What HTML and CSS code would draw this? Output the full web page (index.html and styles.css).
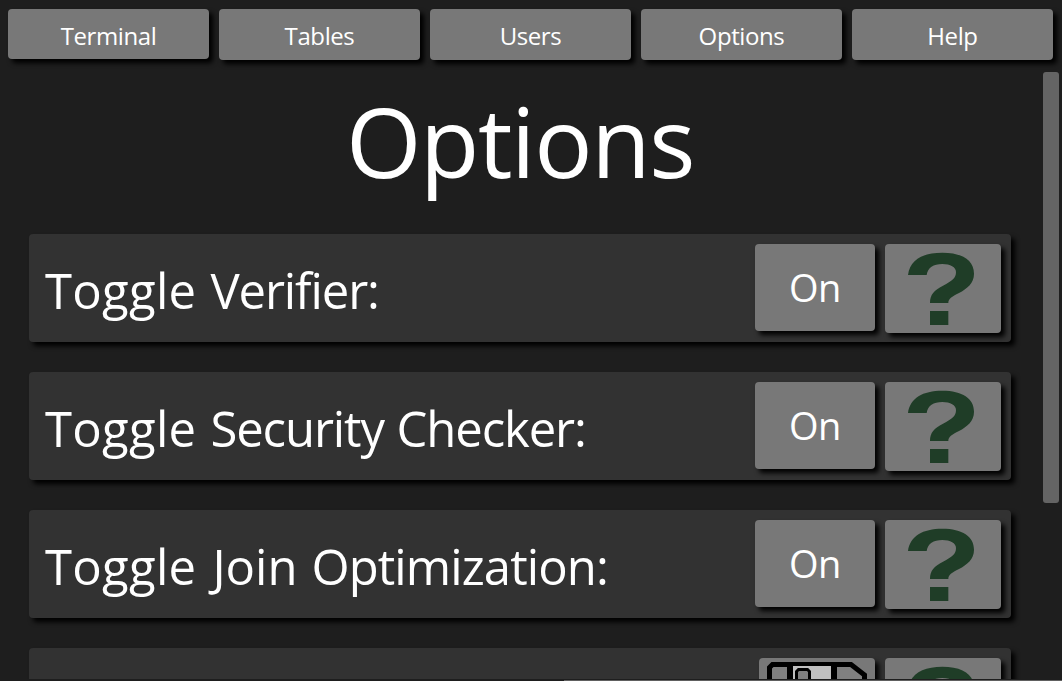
FILE: index.html
```html
<!DOCTYPE html>
<html lang="en">
<head>
<meta charset="utf-8">
<title>Options</title>
<link rel="stylesheet" href="styles.css">
</head>
<body>
<svg class="defs" width="0" height="0" aria-hidden="true">
  <symbol id="help" viewBox="0 0 348 267">
    <path d="M69 93C75 48 113 26 172 26C232 26 267 49 267 89C267 118 246 134 222 147C200 158 190 165 190 177H135C135 151 147 139 174 125C202 110 213 103 213 84C213 69 196 60 172 60C145 60 128 71 125 93ZM135 201H190V243H135Z"/>
  </symbol>
</svg>
<nav class="nav">
  <button class="btn tab first">Terminal</button>
  <button class="btn tab">Tables</button>
  <button class="btn tab">Users</button>
  <button class="btn tab">Options</button>
  <button class="btn tab">Help</button>
</nav>
<main class="view">
  <section class="content">
    <h1 class="title">Options</h1>
    <div class="row">
      <span class="label">Toggle <span class="tight">Verifier:</span></span>
      <button class="btn toggle">On</button>
      <button class="btn icon" aria-label="Help"><svg class="help"><use href="#help"/></svg></button>
    </div>
    <div class="row">
      <span class="label">Toggle <span class="tight">Security Checker:</span></span>
      <button class="btn toggle">On</button>
      <button class="btn icon" aria-label="Help"><svg class="help"><use href="#help"/></svg></button>
    </div>
    <div class="row">
      <span class="label">Toggle <span class="join">Join</span> <span class="snug">Optimization:</span></span>
      <button class="btn toggle">On</button>
      <button class="btn icon" aria-label="Help"><svg class="help"><use href="#help"/></svg></button>
    </div>
    <div class="row">
      <span class="label"></span>
      <button class="btn icon" aria-label="Save"><svg class="save" viewBox="0 0 116 89">
        <path class="disk" d="M10.500 84V9.500L13.500 6.500H92L105.500 17V84Z"/>
        <path class="shutter" d="M31 8H75V34H31Z"/>
        <path class="line" d="M31 6V34H75V6"/>
        <path class="slot" d="M37.500 30V13.500L39.500 11.500H48.500L50.500 13.500V30Z"/>
      </svg></button>
      <button class="btn icon" aria-label="Help"><svg class="help"><use href="#help"/></svg></button>
    </div>
  </section>
  <div class="scroll"><div class="thumb"></div></div>
</main>
<div class="edge"></div>
</body>
</html>
```
FILE: styles.css
```css
* { box-sizing: border-box; }
body {
  margin: 0;
  height: 681px;
  overflow: hidden;
  background: #1e1e1e;
  color: #fff;
  font-family: "Open Sans", "Noto Sans", sans-serif;
}
.defs { position: absolute; }
.nav {
  display: flex;
  gap: 10px;
  height: 72px;
  padding: 9px 9px 0 8px;
}
.btn {
  border: 0;
  padding: 0;
  border-radius: 4px;
  background: #787878;
  color: #fff;
  font-family: inherit;
  box-shadow: 4px 4px 5px #000;
}
.tab {
  flex: 1;
  height: 51px;
  padding-top: 2px;
  font-size: 24px;
  line-height: 33px;
  letter-spacing: -0.4px;
}
.first { height: 50px; padding-top: 3px; }
.view { display: flex; height: 609px; overflow: hidden; }
.content { width: 1011px; padding-left: 29px; flex: none; }
.title {
  margin: 0;
  height: 162px;
  font-size: 97px;
  font-weight: 400;
  line-height: 137px;
  letter-spacing: -1.4px;
  text-align: center;
}
.row {
  display: flex;
  gap: 10px;
  height: 108px;
  margin-bottom: 30px;
  padding: 10px 10px 0 16px;
  border-radius: 4px;
  background: #323232;
  box-shadow: 4px 4px 5px #000;
}
.label {
  flex: 1;
  font-size: 49px;
  line-height: 92px;
  letter-spacing: 0.3px;
  word-spacing: 1px;
  white-space: nowrap;
}
.tight { letter-spacing: -1.1px; }
.snug { letter-spacing: -0.9px; }
.join { margin-left: 2px; letter-spacing: 0; }
.toggle { width: 120px; height: 87px; padding-bottom: 2px; font-size: 38px; letter-spacing: -0.5px; }
.icon { width: 116px; height: 89px; }
.icon svg { display: block; width: 116px; height: 89px; }
.help { fill: #1f3d27; }
.disk { fill: #808080; stroke: #000; stroke-width: 5px; }
.shutter { fill: #c0c0c0; }
.line { fill: none; stroke: #000; stroke-width: 6px; }
.slot { fill: #808080; stroke: #000; stroke-width: 3px; }
.scroll { margin-left: 32px; width: 16px; }
.thumb { height: 431px; border-radius: 3px; background: #646464; }
.edge {
  position: absolute;
  left: 0;
  top: 679px;
  width: 1062px;
  height: 2px;
  background: linear-gradient(90deg, #1e1e1e 564px, #606060 564px) 0 1px no-repeat, #1e1e1e;
}
```
